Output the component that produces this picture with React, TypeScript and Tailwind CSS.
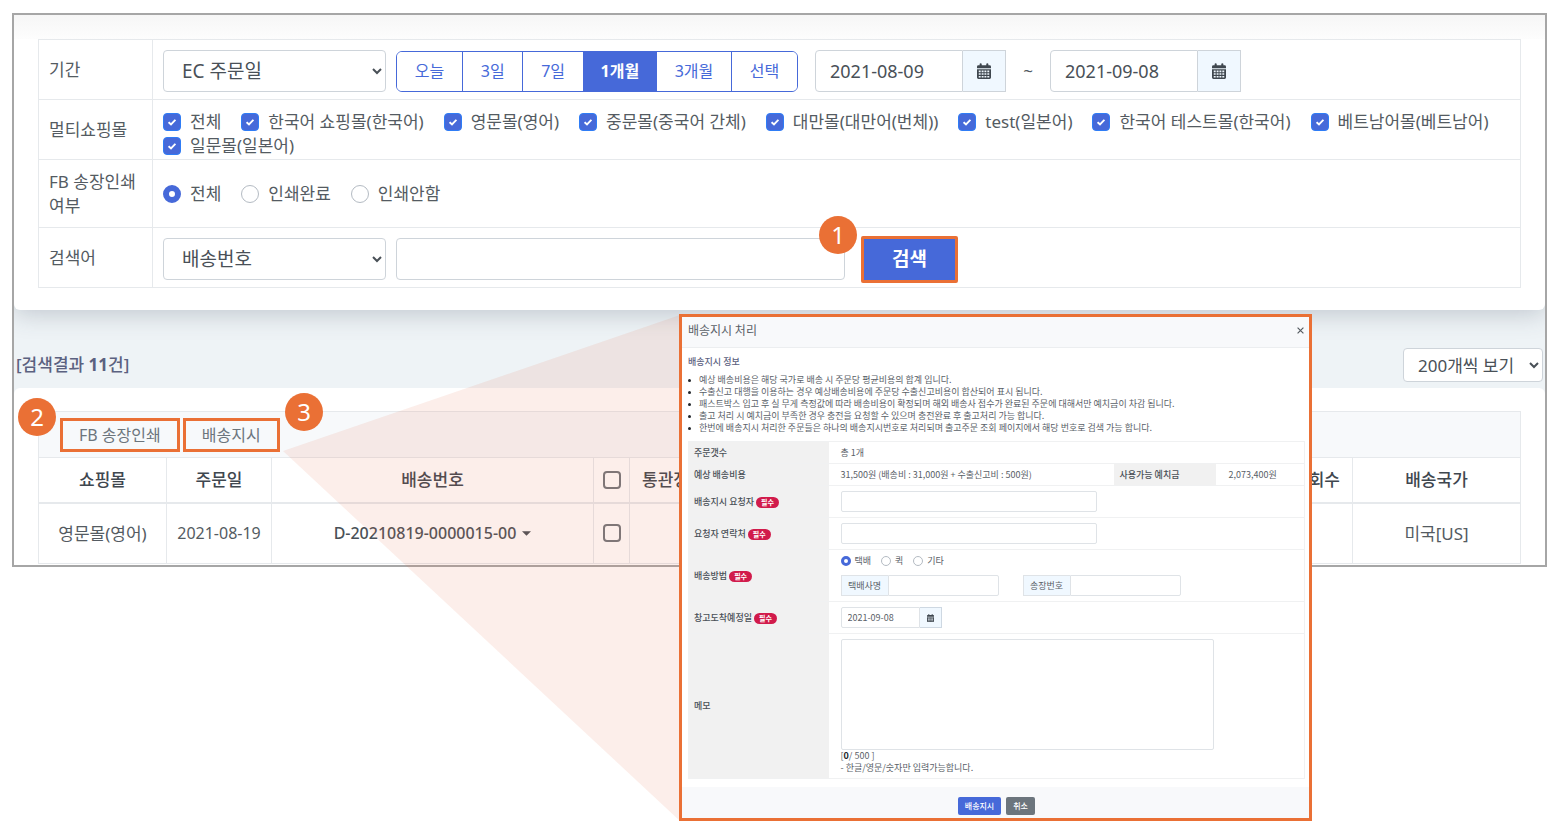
import { clsx } from 'clsx';
import type { ReactNode } from 'react';

const malls = [
  '전체',
  '한국어 쇼핑몰(한국어)',
  '영문몰(영어)',
  '중문몰(중국어 간체)',
  '대만몰(대만어(번체))',
  'test(일본어)',
  '한국어 테스트몰(한국어)',
  '베트남어몰(베트남어)',
  '일문몰(일본어)',
];

const periods = ['오늘', '3일', '7일', '1개월', '3개월', '선택'];
const printStates = ['전체', '인쇄완료', '인쇄안함'];

const notices = [
  '예상 배송비용은 해당 국가로 배송 시 주문당 평균비용의 합계 입니다.',
  '수출신고 대행을 이용하는 경우 예상배송비용에 주문당 수출신고비용이 합산되어 표시 됩니다.',
  '패스트박스 입고 후 실 무게 측정값에 따라 배송비용이 확정되며 해외 배송사 접수가 완료된 주문에 대해서만 예치금이 차감 됩니다.',
  '출고 처리 시 예치금이 부족한 경우 충전을 요청할 수 있으며 충전완료 후 출고처리 가능 합니다.',
  '한번에 배송지시 처리한 주문들은 하나의 배송지시번호로 처리되며 출고주문 조회 페이지에서 해당 번호로 검색 가능 합니다.',
];

function CalendarIcon({ className }: { className: string }) {
  return (
    <svg viewBox="0 0 16 18" className={className} fill="currentColor" aria-hidden="true">
      <path d="M3 1.2a1 1 0 0 1 2.4 0V2.4h5.2V1.2a1 1 0 0 1 2.4 0V2.4h1.4A1.6 1.6 0 0 1 16 4v1.9H0V4a1.6 1.6 0 0 1 1.6-1.6H3z" />
      <path
        fillRule="evenodd"
        d="M0 7h16v9.4a1.6 1.6 0 0 1-1.6 1.6H1.6A1.6 1.6 0 0 1 0 16.4zM2 8.4v2h2.2v-2zM5.3 8.4v2h2.2v-2zM8.5 8.4v2h2.2v-2zM11.8 8.4v2H14v-2zM2 11.6v1.8h2.2v-1.8zM5.3 11.6v1.8h2.2v-1.8zM8.5 11.6v1.8h2.2v-1.8zM11.8 11.6v1.8H14v-1.8zM2 14.6v1.8h2.2v-1.8zM5.3 14.6v1.8h2.2v-1.8zM8.5 14.6v1.8h2.2v-1.8zM11.8 14.6v1.8H14v-1.8z"
      />
    </svg>
  );
}

function Check({ label }: { label: string }) {
  return (
    <label className="mr-5 inline-flex items-center gap-[9px] whitespace-nowrap">
      <span className="relative flex">
        <input
          type="checkbox"
          defaultChecked
          className="size-[18px] appearance-none rounded border border-[#2f7df6] bg-[#4669d9]"
        />
        <svg viewBox="0 0 8 8" className="pointer-events-none absolute top-[5px] left-[5px] size-2" aria-hidden="true">
          <path d="M.6 4.200 3 6.500 7.400 1.800" fill="none" stroke="#fff" strokeWidth="1.900" />
        </svg>
      </span>
      {label}
    </label>
  );
}

function Radio({ name, label, checked, small }: { name: string; label: string; checked?: boolean; small?: boolean }) {
  return (
    <label
      className={clsx(
        'inline-flex items-center whitespace-nowrap',
        small ? 'mr-[10px] gap-1' : 'mr-5 gap-[9px]'
      )}
    >
      <input
        type="radio"
        name={name}
        defaultChecked={checked}
        className={clsx(
          'appearance-none rounded-full border border-[#b4bbc3] bg-white checked:border-[#4669d9]',
          small ? 'size-[10px] checked:border-[3px]' : 'size-[18px] checked:border-[6px]'
        )}
      />
      {label}
    </label>
  );
}

function DateField({ label, value }: { label: string; value: string }) {
  return (
    <div className="flex h-[42px] w-[191px]">
      <input
        type="text"
        aria-label={label}
        defaultValue={value}
        className="w-0 flex-1 rounded-l border border-[#ced4da] px-[14px] text-lg text-[#495057]"
      />
      <button
        type="button"
        aria-label={`${label} 달력`}
        className="flex w-[43px] items-center justify-center border border-l-0 border-[#ced4da] bg-[#f0f8ff] text-[#3f474f]"
      >
        <CalendarIcon className="h-4 w-[14px]" />
      </button>
    </div>
  );
}

function FilterRow({ title, className, children }: { title: string; className: string; children: ReactNode }) {
  return (
    <tr className={className}>
      <th className="border border-[#e6e9ec] px-[10px] text-left leading-6 font-normal">{title}</th>
      <td className="border border-[#e6e9ec] px-[10px] pt-[3px]">{children}</td>
    </tr>
  );
}

function Marker({ n, className }: { n: number; className: string }) {
  return (
    <span
      className={clsx(
        'absolute z-20 flex size-[38px] items-center justify-center rounded-full bg-[#ea7035] text-2xl text-white',
        className
      )}
    >
      {n}
    </span>
  );
}

function SearchPanel() {
  return (
    <section className="relative rounded-b-md bg-white px-6 pt-6 pb-[22px] shadow-[0_4px_24px_rgba(60,70,90,0.25)]">
      <div className="pointer-events-none absolute inset-x-0 top-0 h-6 bg-linear-to-b from-[#f6f6f6] to-[#fdfdfd]" />
      <table className="relative w-full table-fixed border-collapse bg-white">
        <colgroup>
          <col className="w-[114px]" />
          <col />
        </colgroup>
        <tbody>
          <FilterRow title="기간" className="h-[60px]">
            <div className="flex items-center">
              <select
                aria-label="기간 기준"
                className="mr-[10px] h-[42px] w-[223px] rounded border border-[#ced4da] bg-white px-[14px] text-[19px] text-[#495057]"
              >
                <option>EC 주문일</option>
              </select>
              <div className="mr-[17px] flex h-[41px] w-[402px] divide-x divide-[#4669d9] overflow-hidden rounded-md border border-[#4669d9]">
                {periods.map((p) => (
                  <button
                    key={p}
                    type="button"
                    className={clsx(
                      'flex-auto text-base',
                      p === '1개월' ? 'bg-[#4669d9] px-4 font-bold text-white' : 'bg-white px-[17px] text-[#4669d9]'
                    )}
                  >
                    {p}
                  </button>
                ))}
              </div>
              <DateField label="시작일" value="2021-08-09" />
              <span className="w-[44px] text-center">~</span>
              <DateField label="종료일" value="2021-09-08" />
            </div>
          </FilterRow>
          <FilterRow title="멀티쇼핑몰" className="h-[60px]">
            <div className="flex flex-wrap pt-[5px] leading-6">
              {malls.map((m) => (
                <Check key={m} label={m} />
              ))}
            </div>
          </FilterRow>
          <FilterRow title="FB 송장인쇄 여부" className="h-[68px]">
            {printStates.map((s, i) => (
              <Radio key={s} name="printed" label={s} checked={i === 0} />
            ))}
          </FilterRow>
          <FilterRow title="검색어" className="h-[60px]">
            <div className="flex items-center">
              <select
                aria-label="검색 기준"
                className="mr-[10px] h-[42px] w-[223px] rounded border border-[#ced4da] bg-white px-[14px] text-[19px] text-[#495057]"
              >
                <option>배송번호</option>
              </select>
              <input
                type="text"
                aria-label="검색어"
                className="mr-4 h-[42px] w-[449px] rounded border border-[#ced4da] px-3 text-lg"
              />
              <div className="relative">
                <Marker n={1} className="-top-5 -left-[42px]" />
                <button
                  type="button"
                  className="block h-[47px] w-[97px] rounded-xs border-3 border-[#ea7035] bg-[#4669d9] text-[19px] font-bold text-white"
                >
                  검색
                </button>
              </div>
            </div>
          </FilterRow>
        </tbody>
      </table>
    </section>
  );
}

function OrderTable() {
  const th = 'border border-b-2 border-[#e6e9ec] px-3 font-medium text-[#3f474f]';
  const td = 'border border-[#e6e9ec] text-center';
  const box = 'block mx-auto size-[18px] appearance-none rounded border-2 border-[#71777d] bg-white';
  const tool = 'h-[34px] border-3 border-[#ea7035] px-4 text-[#6c757d]';
  return (
    <section className="rounded-t-md bg-white px-6 pt-[23px] pb-px">
      <div className="relative flex h-[46px] items-center gap-[3px] border border-b-0 border-[#e6e9ec] bg-[#f7f9fb] pl-[21px] text-base">
        <Marker n={2} className="-top-[14px] -left-[21px]" />
        <button type="button" className={tool}>FB 송장인쇄</button>
        <button type="button" className={tool}>배송지시</button>
        <Marker n={3} className="-top-[19px] left-[246px]" />
      </div>
      <table className="w-full table-fixed border-collapse">
        <colgroup>
          <col className="w-[128px]" />
          <col className="w-[105px]" />
          <col className="w-[322px]" />
          <col className="w-9" />
          <col />
          <col />
          <col className="w-[168px]" />
        </colgroup>
        <thead>
          <tr className="h-[45px]">
            <th className={th}>쇼핑몰</th>
            <th className={th}>주문일</th>
            <th className={th}>배송번호</th>
            <th className="border border-b-2 border-[#e6e9ec]">
              <input type="checkbox" aria-label="전체 선택" className={box} />
            </th>
            <th className={clsx(th, 'text-left')}>통관정</th>
            <th className={clsx(th, 'text-right')}>회수</th>
            <th className={th}>배송국가</th>
          </tr>
        </thead>
        <tbody>
          <tr className="h-[61px]">
            <td className={td}>영문몰(영어)</td>
            <td className={clsx(td, 'text-base')}>2021-08-19</td>
            <td className={clsx(td, 'text-base font-medium text-[#495057]')}>
              <button type="button" className="inline-flex items-center gap-[6px]">
                D-20210819-0000015-00
                <svg viewBox="0 0 10 5" className="h-[5px] w-[9px]" fill="currentColor" aria-hidden="true">
                  <path d="M0 0h10L5 5z" />
                </svg>
              </button>
            </td>
            <td className={td}>
              <input type="checkbox" aria-label="주문 선택" className={box} />
            </td>
            <td className={td} />
            <td className={td} />
            <td className={td}>미국[US]</td>
          </tr>
        </tbody>
      </table>
    </section>
  );
}

function Required() {
  return (
    <span className="ml-[2px] inline-block rounded-full bg-[#d11b4b] px-[5px] text-[7px] leading-[11px] font-bold text-white">
      필수
    </span>
  );
}

function ModalRow({
  title,
  htmlFor,
  required,
  className,
  children,
}: {
  title: string;
  htmlFor?: string;
  required?: boolean;
  className: string;
  children: ReactNode;
}) {
  return (
    <tr className={clsx('border-b border-[#f0f1f2]', className)}>
      <th className="bg-[#f1f1f1] pl-[5px] text-left font-medium text-[#495057]">
        <label htmlFor={htmlFor}>{title}</label>
        {required && <Required />}
      </th>
      {children}
    </tr>
  );
}

function ShippingDialog() {
  const field = 'h-[21px] border border-[#dfe3e7] bg-white px-[6px]';
  return (
    <div
      role="dialog"
      aria-label="배송지시 처리"
      className="absolute top-[314px] left-[679px] z-10 w-[633px] border-3 border-[#ea7035] bg-white font-['Noto_Sans_CJK_KR','Noto_Sans',sans-serif] text-[9px] leading-3 text-[#5a6168]"
    >
      <header className="flex h-[31px] items-center justify-between border-b border-[#eceef0] bg-[#f8f9fb] pr-[3px] pb-1 pl-[6px]">
        <h2 className="text-xs">배송지시 처리</h2>
        <button type="button" aria-label="닫기" className="p-[2px]">
          <svg viewBox="0 0 6 6" className="size-[7px]" aria-hidden="true">
            <path d="M.5.5l5 5M5.500.5l-5 5" stroke="#555b61" strokeWidth="1" />
          </svg>
        </button>
      </header>
      <div className="pt-2 pr-1 pb-2 pl-[6px]">
        <h3 className="mb-[6px] font-medium text-[#5b6180]">배송지시 정보</h3>
        <ul className="mb-[7px] whitespace-nowrap">
          {notices.map((n) => (
            <li key={n} className="flex items-center gap-2">
              <span className="size-[3px] rounded-full bg-[#212529]" />
              {n}
            </li>
          ))}
        </ul>
        <table className="w-full table-fixed border-collapse border border-[#f0f1f2]">
          <colgroup>
            <col className="w-[140px]" />
            <col />
            <col className="w-[102px]" />
            <col className="w-[88px]" />
          </colgroup>
          <tbody>
            <ModalRow title="주문갯수" className="h-[22px]">
              <td colSpan={3} className="pl-3">총 1개</td>
            </ModalRow>
            <ModalRow title="예상 배송비용" className="h-[22px]">
              <td className="pl-3">31,500원 (배송비 : 31,000원 + 수출신고비 : 500원)</td>
              <th className="bg-[#f1f1f1] pl-[5px] text-left font-medium text-[#495057]">사용가능 예치금</th>
              <td className="pl-3">2,073,400원</td>
            </ModalRow>
            <ModalRow title="배송지시 요청자" htmlFor="requester" required className="h-8">
              <td colSpan={3} className="pl-3">
                <input id="requester" type="text" className={clsx(field, 'block w-[256px] rounded-xs')} />
              </td>
            </ModalRow>
            <ModalRow title="요청자 연락처" htmlFor="phone" required className="h-8">
              <td colSpan={3} className="pl-3">
                <input id="phone" type="text" className={clsx(field, 'block w-[256px] rounded-xs')} />
              </td>
            </ModalRow>
            <ModalRow title="배송방법" required className="h-[52px]">
              <td colSpan={3} className="pl-3">
                <div className="mb-2 flex">
                  <Radio name="method" label="택배" checked small />
                  <Radio name="method" label="퀵" small />
                  <Radio name="method" label="기타" small />
                </div>
                <div className="flex gap-6">
                  <div className="flex">
                    <label
                      htmlFor="courier"
                      className="flex h-[21px] w-[47px] items-center justify-center border border-r-0 border-[#dfe3e7] bg-[#f0f8ff]"
                    >
                      택배사명
                    </label>
                    <input id="courier" type="text" className={clsx(field, 'w-[111px] rounded-r-xs')} />
                  </div>
                  <div className="flex">
                    <label
                      htmlFor="invoice"
                      className="flex h-[21px] w-[47px] items-center justify-center border border-r-0 border-[#dfe3e7] bg-[#f0f8ff]"
                    >
                      송장번호
                    </label>
                    <input id="invoice" type="text" className={clsx(field, 'w-[111px] rounded-r-xs')} />
                  </div>
                </div>
              </td>
            </ModalRow>
            <ModalRow title="창고도착예정일" htmlFor="arrival" required className="h-8">
              <td colSpan={3} className="pl-3">
                <div className="flex">
                  <input
                    id="arrival"
                    type="text"
                    defaultValue="2021-09-08"
                    className={clsx(field, 'w-[79px] rounded-l-xs')}
                  />
                  <button
                    type="button"
                    aria-label="달력"
                    className="flex h-[21px] w-[22px] items-center justify-center border border-l-0 border-[#ced8e2] bg-[#f0f8ff] text-[#3f474f]"
                  >
                    <CalendarIcon className="h-2 w-[7px]" />
                  </button>
                </div>
              </td>
            </ModalRow>
            <ModalRow title="메모" htmlFor="memo" className="h-[145px]">
              <td colSpan={3} className="pl-3">
                <textarea
                  id="memo"
                  className="block h-[111px] w-[373px] resize-none rounded-xs border border-[#dfe3e7] p-1"
                />
                <p>
                  [<b className="text-[#212529]">0</b>/ 500 ]
                </p>
                <p>- 한글/영문/숫자만 입력가능합니다.</p>
              </td>
            </ModalRow>
          </tbody>
        </table>
      </div>
      <footer className="flex h-[31px] items-center justify-center gap-[5px] bg-[#f8f9fb] pt-[6px] pl-[2px] text-[8px] text-white">
        <button type="button" className="h-[18px] w-[43px] rounded-xs bg-[#4669d9] font-medium">배송지시</button>
        <button type="button" className="h-[18px] w-[29px] rounded-xs bg-[#6c757d] font-medium">취소</button>
      </footer>
    </div>
  );
}

export default function App() {
  return (
    <div className="relative min-h-screen bg-white pt-[13px] pr-[11px] pl-3 font-['Noto_Sans','Noto_Sans_CJK_KR',sans-serif] text-[17px] text-[#545b62]">
      <main className="overflow-hidden border-2 border-[#a6a6a6] bg-[#eef3f6]">
        <SearchPanel />
        <div className="flex items-center justify-between px-[2px] pt-[38px] pb-[6px]">
          <h1 className="font-medium text-[#5b6180]">
            [검색결과 <b>11</b>건]
          </h1>
          <select
            aria-label="페이지당 개수"
            className="relative h-[34px] w-[140px] rounded border border-[#ced4da] bg-white px-[10px] text-[17px] text-[#495057]"
          >
            <option>200개씩 보기</option>
          </select>
        </div>
        <OrderTable />
      </main>

      {/* Callout from the order button to its dialog */}
      <svg
        viewBox="0 0 397 506"
        className="pointer-events-none absolute top-[315px] left-[283px] h-[506px] w-[397px]"
        aria-hidden="true"
      >
        <path d="M0 136 397 0v506z" fill="#ea7050" fillOpacity="0.120" />
      </svg>
      <ShippingDialog />
    </div>
  );
}
